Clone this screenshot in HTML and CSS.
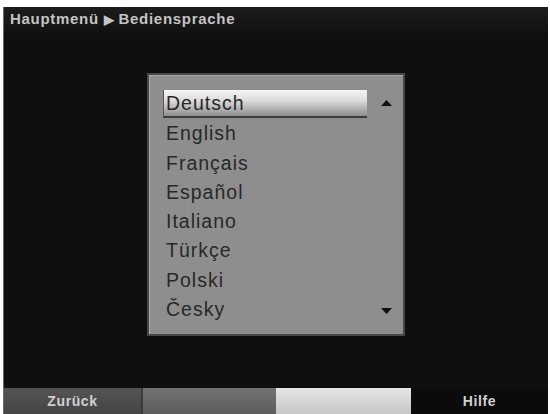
FILE: index.html
```html
<!DOCTYPE html>
<html>
  <head>
    <title>Bediensprache</title>
    <link rel="stylesheet" href="styles.css">
  </head>
  <body>
    <div class="screen">
      <div class="header">Hauptmenü <span class="arrow">&#9654;</span> Bediensprache</div>

      <div class="content">
        <div class="listbox">
          <ul class="langlist">
            <li class="selected">Deutsch</li>
            <li>English</li>
            <li>Français</li>
            <li>Español</li>
            <li>Italiano</li>
            <li>Türkçe</li>
            <li>Polski</li>
            <li>Česky</li>
          </ul>
          <div class="scroll">
            <svg width="11" height="6" viewBox="0 0 11 6"><polygon points="5.5,0 11,6 0,6" fill="#111"/></svg>
            <svg width="11" height="6" viewBox="0 0 11 6"><polygon points="0,0 11,0 5.5,6" fill="#111"/></svg>
          </div>
        </div>
      </div>

      <div class="footer">
        <div class="key red">Zurück</div>
        <div class="key green"></div>
        <div class="key yellow"></div>
        <div class="key blue">Hilfe</div>
      </div>
    </div>
  </body>
</html>
```

FILE: styles.css
```css
body{
	margin:0;
	background:#ffffff;
	font-family:"Liberation Sans", Arial, sans-serif;
}

.screen{
	margin:7px 2px 0 3px;
	height:407px;
	background:#0f0f0f;
	border-left:1px solid #6a6a6a;
	display:flex;
	flex-direction:column;
	box-sizing:border-box;
}

.header{
	padding:3px 0 0 6px;
	height:23px;
	font-size:15px;
	font-weight:bold;
	color:#c4c4c4;
	letter-spacing:0.7px;
	background:linear-gradient(#1c1c1c, #111111);
}
.header .arrow{
	font-size:13px;
	letter-spacing:0;
}

.content{
	flex:1;
	display:flex;
	justify-content:center;
	padding-top:40px;
}

.listbox{
	width:258px;
	height:263px;
	box-sizing:border-box;
	background:#8e8e8e;
	border:2px solid #474747;
	box-shadow:inset 1px 1px 0 #a8a8a8;
	display:flex;
	padding:15px 0 0 14px;
}

.langlist{
	list-style:none;
	margin:0;
	padding:0;
	width:204px;
}
.langlist li{
	height:29.3px;
	line-height:29px;
	font-size:19.5px;
	letter-spacing:1px;
	color:#282828;
	padding-left:3px;
	box-sizing:border-box;
}
.langlist li.selected{
	height:28px;
	margin-bottom:1.3px;
	background:linear-gradient(#f6f6f6 0%, #dcdcdc 40%, #8e8e8e 100%);
	border-bottom:2px solid #3c3c3c;
	border-left:1px solid #555;
	line-height:27px;
	padding-left:2px;
}

.scroll{
	flex:1;
	display:flex;
	flex-direction:column;
	justify-content:space-between;
	align-items:center;
	padding:10px 0 20px 0;
	margin-left:2px;
}

.footer{
	display:grid;
	grid-template-columns:137px 135px 135px 1fr;
	height:26px;
}
.key{
	font-size:14px;
	font-weight:bold;
	letter-spacing:0.6px;
	color:#d0d0d0;
	text-align:center;
	line-height:26px;
}
.red{
	background:linear-gradient(#545454, #444444);
}
.green{
	background:linear-gradient(#727272, #5c5c5c);
	border-left:2px solid #3a3a3a;
}
.yellow{
	background:linear-gradient(#e6e6e6, #c6c6c6);
}
.blue{
	background:#0b0b0b;
}
```
